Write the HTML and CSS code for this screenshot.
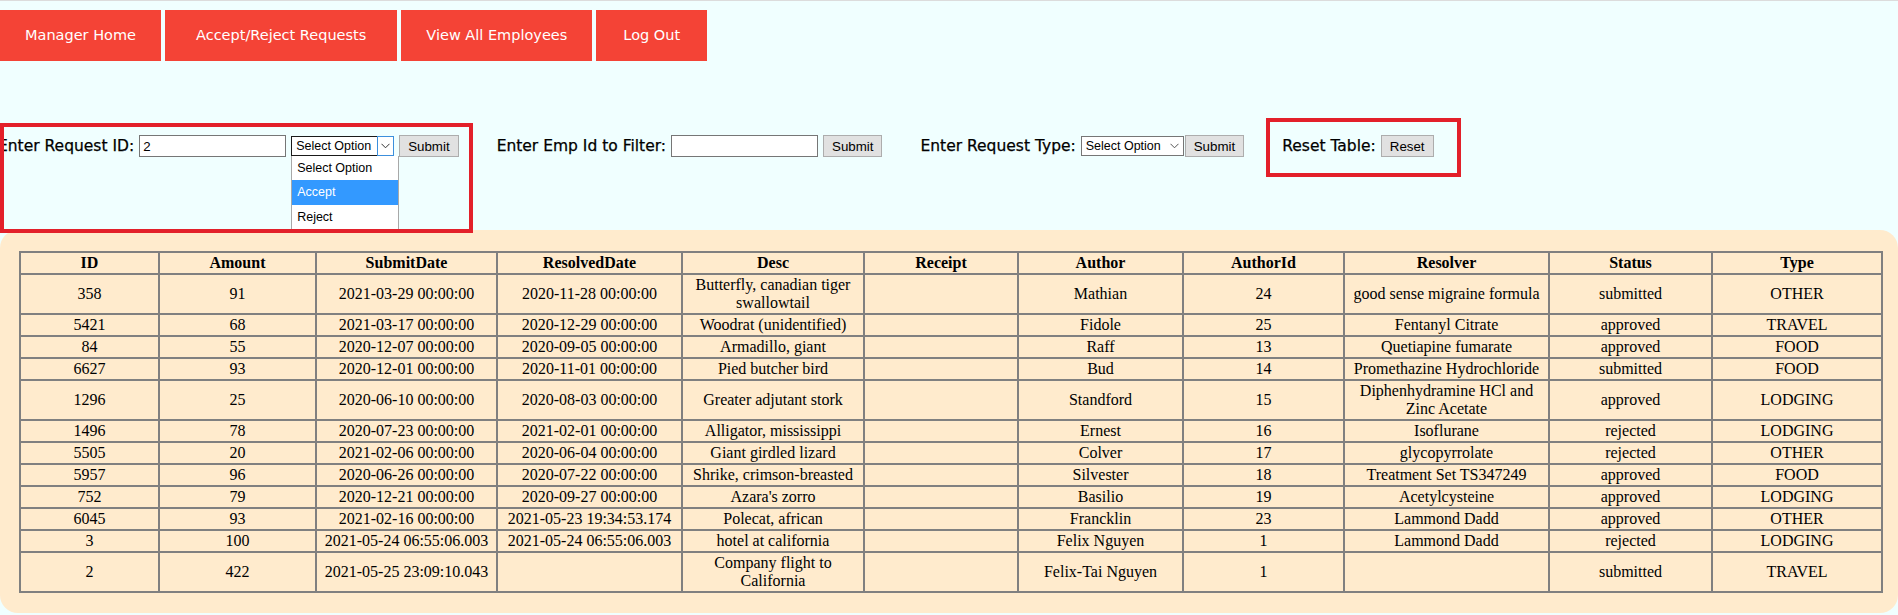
FILE: index.html
```html
<!DOCTYPE html>
<html lang="en">
<head>
<meta charset="utf-8">
<title>Manager - Requests</title>
<link rel="stylesheet" href="styles.css">
</head>
<body>
<nav class="topnav">
  <a class="nav-btn" href="#">Manager Home</a>
  <a class="nav-btn nav-wide" href="#">Accept/Reject Requests</a>
  <a class="nav-btn" href="#">View All Employees</a>
  <a class="nav-btn nav-short" href="#">Log Out</a>
</nav>

<div class="filters">
  <div class="group">
    <label class="lbl">Enter Request ID:</label>
    <input class="txt" type="text" value="2">
    <span class="sel sel-open">
      <span class="sel-text">Select Option</span>
      <span class="sel-arrow"><svg width="9" height="6" viewBox="0 0 9 6"><path d="M0.5 0.8 L4.5 4.8 L8.5 0.8" fill="none" stroke="#333" stroke-width="1"/></svg></span>
      <span class="sel-list">
        <span class="opt">Select Option</span>
        <span class="opt opt-hl">Accept</span>
        <span class="opt">Reject</span>
      </span>
    </span>
    <button class="btn">Submit</button>
    <span class="mark mark-decide"></span>
  </div>

  <div class="group">
    <label class="lbl">Enter Emp Id to Filter:</label>
    <input class="txt" type="text">
    <button class="btn">Submit</button>
  </div>

  <div class="group">
    <label class="lbl">Enter Request Type:</label>
    <span class="sel">
      <span class="sel-text">Select Option</span>
      <span class="sel-arrow plain"><svg width="9" height="6" viewBox="0 0 9 6"><path d="M0.5 0.8 L4.5 4.8 L8.5 0.8" fill="none" stroke="#555" stroke-width="1"/></svg></span>
    </span>
    <button class="btn btn-tight">Submit</button>
  </div>

  <div class="group">
    <label class="lbl">Reset Table:</label>
    <button class="btn">Reset</button>
    <span class="mark mark-reset"></span>
  </div>
</div>

<section class="panel">
  <table class="reqs">
    <colgroup>
      <col class="c-id"><col class="c-amt"><col class="c-sub"><col class="c-res"><col class="c-desc"><col class="c-rec"><col class="c-auth"><col class="c-aid"><col class="c-rslv"><col class="c-stat"><col class="c-type">
    </colgroup>
    <thead>
      <tr><th>ID</th><th>Amount</th><th>SubmitDate</th><th>ResolvedDate</th><th>Desc</th><th>Receipt</th><th>Author</th><th>AuthorId</th><th>Resolver</th><th>Status</th><th>Type</th></tr>
    </thead>
    <tbody>
      <tr><td>358</td><td>91</td><td>2021-03-29 00:00:00</td><td>2020-11-28 00:00:00</td><td>Butterfly, canadian tiger swallowtail</td><td></td><td>Mathian</td><td>24</td><td>good sense migraine formula</td><td>submitted</td><td>OTHER</td></tr>
      <tr><td>5421</td><td>68</td><td>2021-03-17 00:00:00</td><td>2020-12-29 00:00:00</td><td>Woodrat (unidentified)</td><td></td><td>Fidole</td><td>25</td><td>Fentanyl Citrate</td><td>approved</td><td>TRAVEL</td></tr>
      <tr><td>84</td><td>55</td><td>2020-12-07 00:00:00</td><td>2020-09-05 00:00:00</td><td>Armadillo, giant</td><td></td><td>Raff</td><td>13</td><td>Quetiapine fumarate</td><td>approved</td><td>FOOD</td></tr>
      <tr><td>6627</td><td>93</td><td>2020-12-01 00:00:00</td><td>2020-11-01 00:00:00</td><td>Pied butcher bird</td><td></td><td>Bud</td><td>14</td><td>Promethazine Hydrochloride</td><td>submitted</td><td>FOOD</td></tr>
      <tr><td>1296</td><td>25</td><td>2020-06-10 00:00:00</td><td>2020-08-03 00:00:00</td><td>Greater adjutant stork</td><td></td><td>Standford</td><td>15</td><td>Diphenhydramine HCl and Zinc Acetate</td><td>approved</td><td>LODGING</td></tr>
      <tr><td>1496</td><td>78</td><td>2020-07-23 00:00:00</td><td>2021-02-01 00:00:00</td><td>Alligator, mississippi</td><td></td><td>Ernest</td><td>16</td><td>Isoflurane</td><td>rejected</td><td>LODGING</td></tr>
      <tr><td>5505</td><td>20</td><td>2021-02-06 00:00:00</td><td>2020-06-04 00:00:00</td><td>Giant girdled lizard</td><td></td><td>Colver</td><td>17</td><td>glycopyrrolate</td><td>rejected</td><td>OTHER</td></tr>
      <tr><td>5957</td><td>96</td><td>2020-06-26 00:00:00</td><td>2020-07-22 00:00:00</td><td>Shrike, crimson-breasted</td><td></td><td>Silvester</td><td>18</td><td>Treatment Set TS347249</td><td>approved</td><td>FOOD</td></tr>
      <tr><td>752</td><td>79</td><td>2020-12-21 00:00:00</td><td>2020-09-27 00:00:00</td><td>Azara's zorro</td><td></td><td>Basilio</td><td>19</td><td>Acetylcysteine</td><td>approved</td><td>LODGING</td></tr>
      <tr><td>6045</td><td>93</td><td>2021-02-16 00:00:00</td><td>2021-05-23 19:34:53.174</td><td>Polecat, african</td><td></td><td>Francklin</td><td>23</td><td>Lammond Dadd</td><td>approved</td><td>OTHER</td></tr>
      <tr><td>3</td><td>100</td><td>2021-05-24 06:55:06.003</td><td>2021-05-24 06:55:06.003</td><td>hotel at california</td><td></td><td>Felix Nguyen</td><td>1</td><td>Lammond Dadd</td><td>rejected</td><td>LODGING</td></tr>
      <tr><td>2</td><td>422</td><td>2021-05-25 23:09:10.043</td><td></td><td>Company flight to California</td><td></td><td>Felix-Tai Nguyen</td><td>1</td><td></td><td>submitted</td><td>TRAVEL</td></tr>
    </tbody>
  </table>
</section>
</body>
</html>
```

FILE: styles.css
```css
html, body {
  margin: 0;
  padding: 0;
}

body {
  background: #f0ffff;
  border-top: 1px solid #dcdcdc;
  font-family: "Comic Sans MS", "DejaVu Sans", sans-serif;
  color: #000;
  overflow: hidden;
}

/* top navigation */
.topnav {
  display: flex;
  gap: 4px;
  padding-top: 9px;
}

.nav-btn {
  display: block;
  background: #f44336;
  color: #fff;
  text-decoration: none;
  font-size: 14.5px;
  line-height: 19px;
  padding: 16px 25px;
  white-space: nowrap;
}

.nav-wide {
  padding: 16px 31px;
}

.nav-short {
  padding: 16px 27px;
}

/* filter row */
.filters {
  display: flex;
  align-items: center;
  gap: 38px;
  margin: 74px 0 0 -2px;
  height: 22px;
}

.group {
  position: relative;
  display: flex;
  align-items: center;
  gap: 5px;
}

.lbl {
  font-size: 15.5px;
  line-height: 18px;
  white-space: nowrap;
  -webkit-text-stroke: 0.25px #000;
}

.txt {
  box-sizing: border-box;
  width: 147px;
  height: 22px;
  margin: 0;
  padding: 1px 3px;
  border: 1px solid #767676;
  background: #fff;
  font-family: "Liberation Sans", Arial, sans-serif;
  font-size: 13.33px;
  color: #000;
}

.btn {
  box-sizing: border-box;
  height: 22px;
  margin: 0;
  padding: 0 8px;
  border: 1px solid #adadad;
  background: #e1e1e1;
  font-family: "Liberation Sans", Arial, sans-serif;
  font-size: 13.33px;
  color: #000;
}

.btn-tight {
  margin-left: -4px;
}

.sel {
  position: relative;
  box-sizing: border-box;
  display: flex;
  align-items: center;
  width: 103px;
  height: 20px;
  border: 1px solid #767676;
  background: #fff;
  font-family: "Liberation Sans", Arial, sans-serif;
  font-size: 12.5px;
  padding-left: 4px;
}

.sel-text {
  flex: 1;
  white-space: nowrap;
}

.sel-arrow {
  box-sizing: border-box;
  display: flex;
  align-items: center;
  justify-content: center;
  width: 17px;
  height: 100%;
}

.sel-arrow.plain {
  width: 16px;
}

.sel-open {
  border-color: #1a1a1a;
}

.sel-open .sel-arrow {
  border: 1px solid #3c8fdc;
  margin-right: -1px;
  height: calc(100% + 2px);
  background: #fff;
}

.sel-list {
  position: absolute;
  top: 100%;
  left: -1px;
  width: 108px;
  box-sizing: border-box;
  border: 1px solid #a8a8a8;
  border-top: none;
  background: #fff;
  z-index: 2;
  display: flex;
  flex-direction: column;
  margin-top: 1px;
}

.opt {
  height: 25px;
  line-height: 24px;
  padding-left: 5px;
  white-space: nowrap;
}

.opt:first-child {
  height: 24px;
}

.opt-hl {
  background: #3399ff;
  color: #fff;
}

/* red annotation boxes */
.mark {
  position: absolute;
  border: 4px solid #e3202a;
  pointer-events: none;
  z-index: 3;
}

.mark-decide {
  top: -12px;
  bottom: -76px;
  left: 2px;
  right: -14px;
}

.mark-reset {
  top: -17px;
  bottom: -20px;
  left: -16px;
  right: -27px;
}

/* table panel */
.panel {
  margin-top: 73px;
  padding: 21px 16px 20px 19px;
  background: #ffebcd;
  border-radius: 18px;
}

.reqs {
  width: 100%;
  table-layout: fixed;
  border-collapse: collapse;
  border: 2px solid #808080;
  font-family: "Liberation Serif", "Times New Roman", serif;
  font-size: 16px;
}

.reqs th,
.reqs td {
  border: 2px solid #808080;
  padding: 1px;
  text-align: center;
  vertical-align: middle;
}

.reqs th {
  font-weight: bold;
}

.c-id { width: 139px; }
.c-amt { width: 157px; }
.c-sub { width: 181px; }
.c-res { width: 185px; }
.c-desc { width: 182px; }
.c-rec { width: 154px; }
.c-auth { width: 165px; }
.c-aid { width: 161px; }
.c-rslv { width: 205px; }
.c-stat { width: 163px; }
.c-type { width: 170px; }
```
